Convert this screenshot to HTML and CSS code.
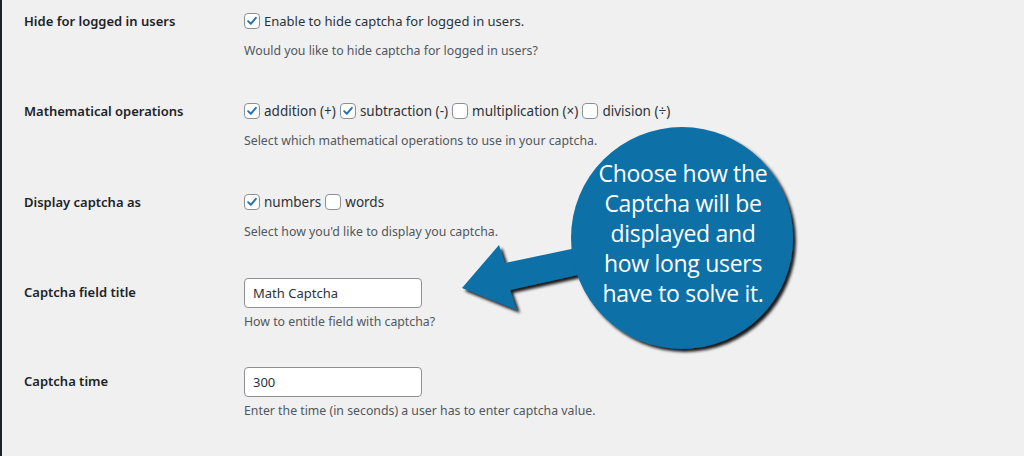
FILE: index.html
```html
<!DOCTYPE html>
<html lang="en">
<head>
<meta charset="utf-8">
<title>Captcha settings</title>
<link rel="stylesheet" href="styles.css">
</head>
<body>
<div class="frame">
  <div class="page">
    <div class="row">
      <div class="label">Hide for logged in users</div>
      <div class="field">
        <div class="line">
          <span class="cb on"><svg viewBox="0 0 16 16"><path d="M3.6 8.2 L6.6 11.2 L12.4 4.4" /></svg></span>
          <span class="opt">Enable to hide captcha for logged in users.</span>
        </div>
        <p class="desc">Would you like to hide captcha for logged in users?</p>
      </div>
    </div>
    <div class="row row-tall">
      <div class="label">Mathematical operations</div>
      <div class="field">
        <div class="line">
          <span class="cb on"><svg viewBox="0 0 16 16"><path d="M3.6 8.2 L6.6 11.2 L12.4 4.4" /></svg></span>
          <span class="opt opt-wide">addition (+)</span>
          <span class="cb on"><svg viewBox="0 0 16 16"><path d="M3.6 8.2 L6.6 11.2 L12.4 4.4" /></svg></span>
          <span class="opt opt-wide">subtraction (-)</span>
          <span class="cb"></span>
          <span class="opt opt-wide">multiplication (×)</span>
          <span class="cb"></span>
          <span class="opt opt-wide">division (÷)</span>
        </div>
        <p class="desc">Select which mathematical operations to use in your captcha.</p>
      </div>
    </div>
    <div class="row">
      <div class="label">Display captcha as</div>
      <div class="field">
        <div class="line">
          <span class="cb on"><svg viewBox="0 0 16 16"><path d="M3.6 8.2 L6.6 11.2 L12.4 4.4" /></svg></span>
          <span class="opt opt-wide">numbers</span>
          <span class="cb"></span>
          <span class="opt opt-wide">words</span>
        </div>
        <p class="desc">Select how you'd like to display you captcha.</p>
      </div>
    </div>
    <div class="row row-short">
      <div class="label">Captcha field title</div>
      <div class="field">
        <div class="input">Math Captcha</div>
        <p class="desc desc-in">How to entitle field with captcha?</p>
      </div>
    </div>
    <div class="row">
      <div class="label">Captcha time</div>
      <div class="field">
        <div class="input">300</div>
        <p class="desc desc-in">Enter the time (in seconds) a user has to enter captcha value.</p>
      </div>
    </div>
  </div>

  <div class="callout">
    <svg class="callout-shape" viewBox="0 0 1024 456" width="1024" height="456">
      <defs>
        <filter id="sh" x="-20%" y="-20%" width="140%" height="140%">
          <feDropShadow dx="3" dy="3" stdDeviation="1.6" flood-color="#000" flood-opacity="0.9"/>
        </filter>
      </defs>
      <g filter="url(#sh)" fill="#0a6fa7">
        <polygon points="462,288 499,245 505,263 600,243 600,270 510,290 517,310"/>
        <circle cx="682" cy="238" r="111"/>
      </g>
    </svg>
    <div class="callout-text">Choose how the<br>Captcha will be<br>displayed and<br>how long users<br>have to solve it.</div>
  </div>
</div>
</body>
</html>
```

FILE: styles.css
```css
* { box-sizing: border-box; }
html, body {
  margin: 0;
  padding: 0;
  background: #f0f0f1;
}
body {
  width: 1024px;
  height: 456px;
  overflow: hidden;
  font-family: "Noto Sans", "Open Sans", sans-serif;
  font-size: 13px;
  color: #1d2327;
}
.frame {
  position: relative;
  width: 1024px;
  height: 456px;
  border-left: 2px solid #1d2327;
}
.page {
  padding: 6px 0 0 22px;
}
.row {
  display: grid;
  grid-template-columns: 220px 1fr;
  height: 90px;
}
.row-tall { height: 91px; }
.row-short { height: 89px; }
.label {
  line-height: 30px;
  font-weight: 600;
  color: #1d2327;
}
.line {
  height: 30px;
  display: flex;
  align-items: center;
  gap: 4px;
  color: #2c3338;
}
.opt { white-space: nowrap; }
.opt-wide { font-size: 13.5px; }
.cb {
  width: 16px;
  height: 16px;
  flex: none;
  border: 1px solid #8c8f94;
  border-radius: 4px;
  background: #fff;
  display: flex;
  align-items: center;
  justify-content: center;
}
.cb svg {
  width: 14px;
  height: 14px;
  fill: none;
  stroke: #2271b1;
  stroke-width: 2.2;
  stroke-linecap: round;
  stroke-linejoin: round;
}
.desc {
  margin: 6px 0 0;
  line-height: 18px;
  font-size: 12.3px;
  color: #50575e;
}
.desc-in { margin-top: 5px; }
.input {
  width: 178px;
  height: 30px;
  margin-top: 1px;
  border: 1px solid #8c8f94;
  border-radius: 4px;
  background: #fff;
  padding: 0 8px;
  line-height: 28px;
  color: #2c3338;
}
.callout {
  position: absolute;
  left: 0;
  top: 0;
  width: 1024px;
  height: 456px;
  pointer-events: none;
}
.callout-shape {
  position: absolute;
  left: -2px;
  top: 0;
}
.callout-text {
  position: absolute;
  left: 570px;
  top: 158px;
  width: 222px;
  text-align: center;
  color: #fff;
  font-family: "Open Sans", "Noto Sans", sans-serif;
  font-size: 23px;
  line-height: 30px;
  letter-spacing: -0.3px;
}
```
